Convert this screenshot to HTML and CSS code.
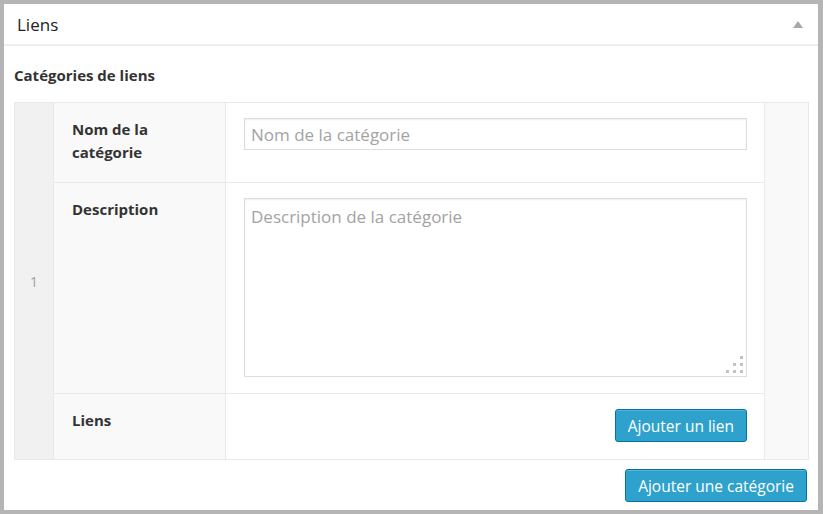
FILE: index.html
```html
<!DOCTYPE html>
<html lang="fr">
  <head>
    <meta charset="UTF-8" />
    <title>Liens</title>
    <link rel="stylesheet" href="styles.css">
  </head>

  <body>
    <div id="box">
      <header class="box__head">
        <h2 class="box__title">Liens</h2>
        <span class="box__toggle"></span>
      </header>

      <div class="box__inside">
        <h3 class="cats__title">Catégories de liens</h3>

        <table class="cats">
          <colgroup>
            <col class="cats__col-num">
            <col class="cats__col-label">
            <col class="cats__col-field">
            <col class="cats__col-side">
          </colgroup>
          <tr class="cats__row cats__row--name">
            <td class="cats__num" rowspan="3">1</td>
            <th class="cats__label">Nom de la catégorie</th>
            <td class="cats__field">
              <input class="cats__input" type="text" placeholder="Nom de la catégorie">
            </td>
            <td class="cats__side" rowspan="3"></td>
          </tr>
          <tr class="cats__row cats__row--desc">
            <th class="cats__label">Description</th>
            <td class="cats__field cats__field--area">
              <textarea class="cats__area" placeholder="Description de la catégorie"></textarea>
              <span class="cats__grip">
                <i></i><i></i><i></i><i></i><i></i><i></i>
              </span>
            </td>
          </tr>
          <tr class="cats__row cats__row--links">
            <th class="cats__label">Liens</th>
            <td class="cats__field cats__field--btn">
              <button class="btn">Ajouter un lien</button>
            </td>
          </tr>
        </table>

        <div class="box__foot">
          <button class="btn btn--big">Ajouter une catégorie</button>
        </div>
      </div>
    </div>
  </body>
</html>
```

FILE: styles.css
```css
html,
body {
  margin: 0;
  background: #b5b5b5;
}

body {
  padding: 4px 5px 4px 4px;
  font-family: "Open Sans", "Liberation Sans", sans-serif;
  color: #333;
}

#box {
  background: #fff;
  height: 506px;
  box-sizing: border-box;
}

.box__head {
  display: flex;
  align-items: center;
  justify-content: space-between;
  height: 40px;
  padding: 0 13px;
  border-bottom: 2px solid #eeeeee;
}

.box__title {
  margin: 0;
  font-size: 17px;
  font-weight: 400;
  color: #222;
}

.box__toggle {
  width: 0;
  height: 0;
  border-left: 5px solid transparent;
  border-right: 5px solid transparent;
  border-bottom: 7px solid #a8a8a8;
  margin-right: 2px;
}

.box__inside {
  padding: 0 10px;
}

.cats__title {
  margin: 0;
  padding: 18px 0 16px;
  font-size: 15px;
  line-height: 22px;
  font-weight: 700;
  color: #333;
}

.cats {
  width: 794px;
  table-layout: fixed;
  border-collapse: collapse;
  border: 1px solid #e5e5e5;
}

.cats__col-num {
  width: 39px;
}

.cats__col-label {
  width: 172px;
}

.cats__col-field {
  width: 539px;
}

.cats__col-side {
  width: 44px;
}

.cats__row--name {
  height: 80px;
}

.cats__row--desc {
  height: 211px;
}

.cats__row--links {
  height: 66px;
}

.cats td,
.cats th {
  padding: 0;
  border: 1px solid #e9e9e9;
}

.cats__num {
  background: #f1f1f1;
  text-align: center;
  vertical-align: middle;
  font-size: 14px;
  color: #a0a0a0;
}

.cats__label {
  background: #f9f9f9;
  text-align: left;
  vertical-align: top;
  padding: 15px 18px 0 !important;
  font-size: 15px;
  line-height: 23px;
  font-weight: 700;
  color: #333;
}

.cats__side {
  background: #f9f9f9;
}

.cats__field {
  padding: 15px 17px 0 18px !important;
  vertical-align: top;
}

.cats__field--area {
  position: relative;
}

.cats__field--btn {
  text-align: right;
}

.cats__input,
.cats__area {
  display: block;
  width: 100%;
  box-sizing: border-box;
  margin: 0;
  border: 1px solid #dddddd;
  box-shadow: inset 0 1px 2px rgba(0, 0, 0, 0.07);
  font-family: "Open Sans", "Liberation Sans", sans-serif;
  font-size: 17px;
  color: #333;
  outline: none;
}

.cats__input {
  height: 32px;
  padding: 0 6px;
}

.cats__area {
  height: 179px;
  padding: 6px 6px;
  line-height: 23px;
  resize: none;
}

.cats__input::placeholder,
.cats__area::placeholder {
  color: #a3a3a3;
}

.cats__grip {
  position: absolute;
  right: 21px;
  bottom: 20px;
  display: grid;
  grid-template-columns: repeat(3, 3px);
  grid-template-rows: repeat(3, 3px);
  gap: 4px;
}

.cats__grip i {
  background: #c2c2c2;
}

.cats__grip i:nth-child(1) {
  grid-area: 1 / 3;
}

.cats__grip i:nth-child(2) {
  grid-area: 2 / 2;
}

.cats__grip i:nth-child(3) {
  grid-area: 2 / 3;
}

.cats__grip i:nth-child(4) {
  grid-area: 3 / 1;
}

.cats__grip i:nth-child(5) {
  grid-area: 3 / 2;
}

.cats__grip i:nth-child(6) {
  grid-area: 3 / 3;
}

.btn {
  height: 33px;
  padding: 0 12px;
  border: 1px solid #0074a2;
  border-radius: 3px;
  background: #2ea2cc;
  box-shadow: inset 0 1px 0 rgba(120, 200, 230, 0.5);
  font-family: "Open Sans", "Liberation Sans", sans-serif;
  font-size: 15.5px;
  color: #fff;
  cursor: pointer;
}

.box__foot {
  display: flex;
  justify-content: flex-end;
  padding-top: 9px;
  margin-right: 1px;
}
```
